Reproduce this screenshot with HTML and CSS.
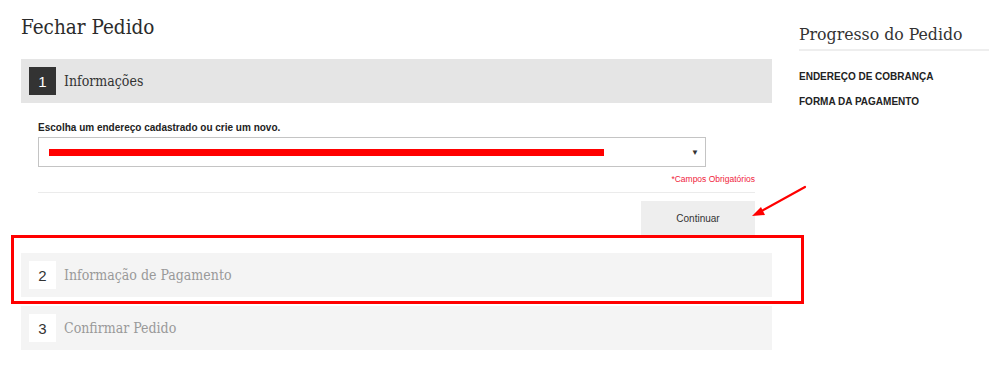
FILE: index.html
```html
<!DOCTYPE html>
<html lang="pt">
<head>
<meta charset="utf-8">
<title>Fechar Pedido</title>
<link rel="stylesheet" href="styles.css">
</head>
<body>
<div class="page">
  <main class="main">
    <h1 class="title">Fechar Pedido</h1>
    <section class="step active">
      <div class="step-head">
        <span class="step-num">1</span>
        <span class="step-title">Informações</span>
      </div>
      <div class="step-body">
        <label class="field-label">Escolha um endereço cadastrado ou crie um novo.</label>
        <div class="select">
          <span class="redact"></span>
          <span class="caret">▼</span>
        </div>
        <div class="required">*Campos Obrigatórios</div>
        <div class="divider"></div>
        <div class="actions">
          <button class="btn">Continuar</button>
        </div>
      </div>
    </section>
    <section class="step">
      <div class="step-head">
        <span class="step-num">2</span>
        <span class="step-title">Informação de Pagamento</span>
      </div>
    </section>
    <section class="step">
      <div class="step-head">
        <span class="step-num">3</span>
        <span class="step-title">Confirmar Pedido</span>
      </div>
    </section>
  </main>
  <aside class="side">
    <h2 class="side-title">Progresso do Pedido</h2>
    <ul class="side-list">
      <li>ENDEREÇO DE COBRANÇA</li>
      <li>FORMA DA PAGAMENTO</li>
    </ul>
  </aside>
  <div class="annot-box"></div>
  <svg class="annot-arrow" width="70" height="45" viewBox="0 0 70 45">
    <line x1="56" y1="3" x2="9" y2="29" stroke="#f00" stroke-width="2.2" stroke-linecap="round"/>
    <polygon points="3,32 12,23 16,31" fill="#f00"/>
  </svg>
</div>
</body>
</html>
```

FILE: styles.css
```css
* { box-sizing: border-box; }
html, body { margin: 0; padding: 0; background: #fff; }
body { font-family: "Liberation Sans", Arial, sans-serif; color: #222; }

.page {
  position: relative;
  display: flex;
  gap: 27px;
  padding: 0 10px 0 21px;
  width: 999px;
  height: 380px;
}

.main { width: 751px; flex: none; }

.title {
  margin: 0;
  padding-top: 14px;
  height: 59px;
  font-family: "DejaVu Serif Condensed", "DejaVu Serif", serif;
  font-weight: normal;
  font-size: 20.5px;
  line-height: 26px;
  color: #2b2b2b;
}

.step { margin-bottom: 9px; }

.step-head {
  display: flex;
  align-items: center;
  gap: 8px;
  height: 44px;
  padding-left: 8px;
  background: #f4f4f4;
}
.step.active .step-head { background: #e5e5e5; }

.step-num {
  width: 27px;
  height: 28px;
  display: flex;
  align-items: center;
  justify-content: center;
  background: #fff;
  color: #333;
  font-family: "Liberation Sans", Arial, sans-serif;
  font-size: 15px;
}
.step.active .step-num { background: #333; color: #fff; }

.step-title {
  font-family: "DejaVu Serif Condensed", "DejaVu Serif", serif;
  font-size: 14px;
  color: #999;
  padding-bottom: 1px;
}
.step.active .step-title { color: #333; }

.step-body {
  padding: 18px 17px 0 17px;
}
.step.active { margin-bottom: 17px; }

.field-label {
  display: block;
  font-size: 10px;
  font-weight: bold;
  line-height: 13px;
  color: #222;
  margin-bottom: 3px;
}

.select {
  position: relative;
  width: 668px;
  height: 30px;
  border: 1px solid #c4c4c4;
  background: #fff;
  display: flex;
  align-items: center;
  padding-left: 10px;
}
.redact {
  display: block;
  width: 555px;
  height: 7px;
  background: #f00;
}
.caret {
  margin-left: auto;
  margin-right: 6px;
  font-size: 8px;
  color: #333;
}

.required {
  text-align: right;
  font-size: 8.5px;
  color: #f0243c;
  margin-top: 6px;
  line-height: 12px;
}

.divider {
  height: 1px;
  background: #ebebeb;
  margin-top: 7px;
}

.actions {
  display: flex;
  justify-content: flex-end;
  padding-top: 8px;
}
.btn {
  width: 114px;
  height: 35px;
  border: none;
  background: #eee;
  color: #333;
  font-family: "Liberation Sans", Arial, sans-serif;
  font-size: 10px;
  padding: 0;
}

.side { width: 190px; flex: none; padding-top: 22px; }
.side-title {
  margin: 0;
  font-family: "DejaVu Serif Condensed", "DejaVu Serif", serif;
  font-weight: normal;
  font-size: 17.5px;
  line-height: 25px;
  color: #333;
  padding-bottom: 2px;
  border-bottom: 2px solid #eee;
}
.side-list {
  list-style: none;
  margin: 0;
  padding: 19px 0 0 0;
}
.side-list li {
  font-size: 10px;
  font-weight: bold;
  line-height: 13px;
  color: #222;
  margin-bottom: 12px;
}

.annot-box {
  position: absolute;
  left: 11px;
  top: 235px;
  width: 793px;
  height: 69px;
  border: 3px solid #f00;
}
.annot-arrow {
  position: absolute;
  left: 749px;
  top: 184px;
}
```
